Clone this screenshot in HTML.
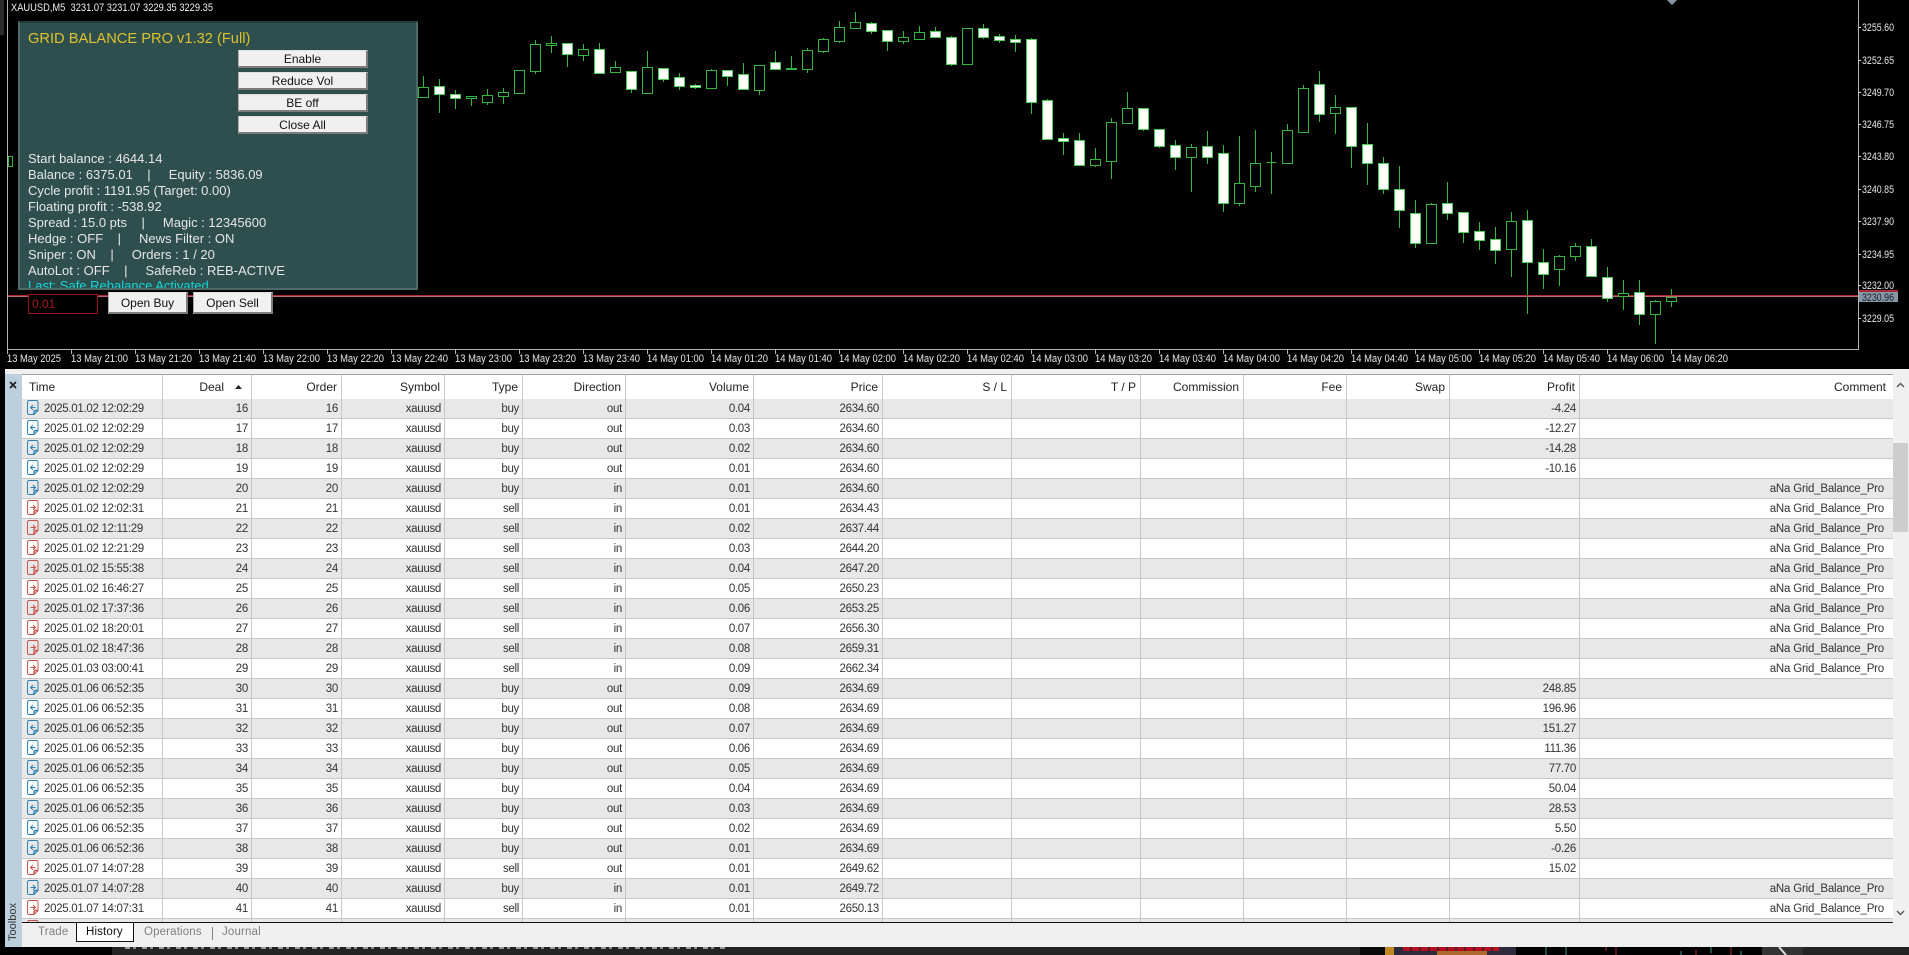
<!DOCTYPE html>
<html><head><meta charset="utf-8"><title>XAUUSD,M5</title>
<style>
html,body{margin:0;padding:0;background:#222}
body{position:relative;width:1909px;height:955px;overflow:hidden;font-family:"Liberation Sans",sans-serif}
.a{position:absolute}
svg text{font-family:"Liberation Sans",sans-serif}
#panel{left:18px;top:21px;width:396px;height:265px;background:#2f4f4f;border:2px solid #4b6a68;border-top-color:#263d3c;overflow:hidden}
#title{left:8px;top:6px;font-size:14.67px;line-height:20px;color:#dcc22c;white-space:pre}
#lines{left:8px;top:128px;font-size:13px;line-height:16px;color:#e6e6e6;white-space:pre}
#lines .c{color:#14d6d6;position:relative;top:-1px}
.btn{box-sizing:border-box;background:#f0f0f0;border-top:1px solid #e0e0e0;border-left:1px solid #a8a8a8;border-right:2px solid #7c7c7c;border-bottom:2px solid #7c7c7c;color:#111;font-size:12px;text-align:center;line-height:17px;white-space:pre}
#edit{left:28px;top:294px;width:70px;height:20px;box-sizing:border-box;border:1px solid #9a1414;background:#000;color:#a81c1c;font-size:12px;line-height:19px;padding-left:3px}
#tw{left:22px;top:374px;width:1871px;height:548px;overflow:hidden;background:#fff}
table{border-collapse:separate;border-spacing:0;table-layout:fixed;width:1871px;font-size:11.5px;letter-spacing:-.3px;color:#333}
td,th{box-sizing:border-box;height:20px;padding:2px 3px 0 0;text-align:right;font-weight:normal;border-right:1px solid #c8c8c8;border-bottom:1px solid #c8c8c8;white-space:nowrap;overflow:hidden;line-height:17px}
th{height:25px;color:#222;font-size:12px;letter-spacing:0;padding:0 4px 0 0;border-bottom:0;border-top:1px solid #a0a0a0;background:#fff;line-height:24px}
th:first-child{text-align:left;padding-left:7px}
td:first-child{text-align:left;padding-left:22px;position:relative}
td:last-child{padding-right:9px;border-right:0;letter-spacing:-.2px}
th:last-child{padding-right:7px;border-right:0}
tbody tr:nth-child(odd){background:#e8e8e8}
td svg{position:absolute;left:5px;top:1px;width:12px;height:15px}
.tab{top:923px;font-size:11.5px;line-height:18px;color:#808080;letter-spacing:.15px}
</style></head><body>
<svg width="0" height="0" style="position:absolute">
<defs>
<symbol id="bo" viewBox="0 0 12 15"><g fill="none" stroke="#2a7fb0" stroke-width=".95"><path d="M2 .5h7.500A1.500 1.500 0 0 1 11 2v8.500l-4 4H2A1.500 1.500 0 0 1 .5 13V2A1.500 1.500 0 0 1 2 .5z"/><path d="M8.500 7.500h-5M6 5L3.500 7.500L6 10"/><path d="M7 14.500v-2.500a1.500 1.500 0 0 1 1.500-1.500H11" stroke-width="1.400"/></g></symbol>
<symbol id="bi" viewBox="0 0 12 15"><g fill="none" stroke="#2a7fb0" stroke-width=".95"><path d="M2 .5h7.500A1.500 1.500 0 0 1 11 2v8.500l-4 4H2A1.500 1.500 0 0 1 .5 13V2A1.500 1.500 0 0 1 2 .5z"/><path d="M3.500 7.500h5M6 5L8.500 7.500L6 10"/><path d="M7 14.500v-2.500a1.500 1.500 0 0 1 1.500-1.500H11" stroke-width="1.400"/></g></symbol>
<symbol id="so" viewBox="0 0 12 15"><g fill="none" stroke="#c8504a" stroke-width=".95"><path d="M2 .5h7.500A1.500 1.500 0 0 1 11 2v8.500l-4 4H2A1.500 1.500 0 0 1 .5 13V2A1.500 1.500 0 0 1 2 .5z"/><path d="M8.500 7.500h-5M6 5L3.500 7.500L6 10"/><path d="M7 14.500v-2.500a1.500 1.500 0 0 1 1.500-1.500H11" stroke-width="1.400"/></g></symbol>
<symbol id="si" viewBox="0 0 12 15"><g fill="none" stroke="#c8504a" stroke-width=".95"><path d="M2 .5h7.500A1.500 1.500 0 0 1 11 2v8.500l-4 4H2A1.500 1.500 0 0 1 .5 13V2A1.500 1.500 0 0 1 2 .5z"/><path d="M3.500 7.500h5M6 5L8.500 7.500L6 10"/><path d="M7 14.500v-2.500a1.500 1.500 0 0 1 1.500-1.500H11" stroke-width="1.400"/></g></symbol>
</defs></svg>

<!-- chart -->
<svg class="a" style="left:0;top:0" width="1909" height="369" viewBox="0 0 1909 369">
<rect width="1909" height="369" fill="#000"/>
<rect x="0" y="0" width="4" height="35" fill="#2c2c2c"/>
<!-- wicks -->
<path fill="none" stroke="#30b83c" d="M423.5 76V97M439.5 79V113M455.5 90V109M471.5 96V106M487.5 89V105M503.5 88V104M535.5 40V74M551.5 36V53M567.5 43V67M583.5 44V61M599.5 43V73M615.5 61V73M631.5 71V93M647.5 51V93M663.5 68V82M679.5 73V90M695.5 84V89M711.5 69V89M727.5 70V86M743.5 63V89M759.5 65V95M775.5 51V69M791.5 56V70M807.5 48V73M823.5 38V53M839.5 21V43M855.5 12V28M871.5 22V34M887.5 30V51M903.5 31V44M919.5 26V39M935.5 27V37M951.5 36V66M967.5 28V64M983.5 24V39M999.5 34V43M1015.5 35V52M1031.5 38V114M1047.5 99V139M1063.5 133V155M1079.5 133V165M1095.5 148V167M1111.5 118V179M1127.5 92V123M1143.5 108V131M1159.5 129V148M1175.5 140V170M1191.5 144V192M1207.5 131V164M1223.5 145V212M1239.5 136V206M1255.5 130V192M1271.5 152V194M1287.5 124V164M1303.5 85V132M1319.5 71V122M1335.5 95V134M1351.5 107V168M1367.5 123V185M1383.5 157V194M1399.5 166V228M1415.5 200V248M1431.5 203V243M1447.5 182V220M1463.5 212V243M1479.5 222V250M1495.5 227V264M1511.5 212V277M1527.5 210V314M1543.5 249V289M1559.5 255V286M1575.5 243V261M1591.5 239V277M1607.5 267V302M1623.5 280V310M1639.5 280V325M1655.5 300V344M1671.5 289V307"/>
<!-- red price line -->
<rect x="8" y="295" width="1850" height="1" fill="#a82833"/>
<rect x="8" y="296" width="1850" height="1" fill="#b86a72"/>
<!-- hollow bodies -->
<path fill="#000" stroke="#30b83c" d="M8.500 156.500h4v10h-4zM418.500 87.500h10v10h-10zM466.500 96.500h10v2h-10zM482.500 95.500h10v7h-10zM498.500 92.500h10v4h-10zM514.500 70.500h10v23h-10zM530.500 44.500h10v27h-10zM546.500 43.500h10v2h-10zM578.500 49.500h10v6h-10zM610.500 67.500h10v5h-10zM642.500 67.500h10v26h-10zM706.500 70.500h10v18h-10zM754.500 65.500h10v25h-10zM786.500 68.500h10v1h-10zM802.500 50.500h10v19h-10zM818.500 39.500h10v12h-10zM834.500 27.500h10v14h-10zM850.500 22.500h10v6h-10zM898.500 37.500h10v4h-10zM914.500 32.500h10v7h-10zM962.500 28.500h10v36h-10zM1090.500 159.500h10v6h-10zM1106.500 122.500h10v39h-10zM1122.500 108.500h10v15h-10zM1186.500 147.500h10v10h-10zM1234.500 183.500h10v20h-10zM1250.500 163.500h10v23h-10zM1266.500 162.500h10M1282.500 130.500h10v33h-10zM1298.500 88.500h10v44h-10zM1330.500 107.500h10v6h-10zM1426.500 204.500h10v39h-10zM1506.500 221.500h10v28h-10zM1554.500 256.500h10v13h-10zM1570.500 246.500h10v10h-10zM1618.500 293.500h10v3h-10zM1650.500 301.500h10v13h-10zM1666.500 297.500h10v4h-10z"/>
<!-- filled bodies -->
<path fill="#fff" stroke="#46d052" d="M434.500 86.500h10v8h-10zM450.500 94.500h10v4h-10zM562.500 43.500h10v11h-10zM594.500 49.500h10v24h-10zM626.500 71.500h10v18h-10zM658.500 68.500h10v11h-10zM674.500 77.500h10v9h-10zM690.500 85.500h10v2h-10zM722.500 70.500h10v6h-10zM738.500 74.500h10v15h-10zM770.500 62.500h10v7h-10zM866.500 23.500h10v8h-10zM882.500 30.500h10v11h-10zM930.500 31.500h10v6h-10zM946.500 37.500h10v27h-10zM978.500 28.500h10v9h-10zM994.500 36.500h10v4h-10zM1010.500 39.500h10v3h-10zM1026.500 39.500h10v63h-10zM1042.500 100.500h10v39h-10zM1058.500 138.500h10v3h-10zM1074.500 140.500h10v25h-10zM1138.500 108.500h10v21h-10zM1154.500 129.500h10v17h-10zM1170.500 145.500h10v12h-10zM1202.500 146.500h10v11h-10zM1218.500 153.500h10v50h-10zM1314.500 84.500h10v30h-10zM1346.500 107.500h10v39h-10zM1362.500 144.500h10v19h-10zM1378.500 163.500h10v26h-10zM1394.500 189.500h10v21h-10zM1410.500 213.500h10v30h-10zM1442.500 203.500h10v10h-10zM1458.500 212.500h10v20h-10zM1474.500 231.500h10v9h-10zM1490.500 239.500h10v11h-10zM1522.500 220.500h10v42h-10zM1538.500 262.500h10v12h-10zM1586.500 246.500h10v30h-10zM1602.500 277.500h10v21h-10zM1634.500 292.500h10v22h-10z"/>
<!-- frame -->
<path fill="none" stroke="#b4b4b4" d="M7.500 0V349.500H1858.500V0"/>
<!-- time ticks -->
<path fill="none" stroke="#b4b4b4" d="M7.500 349V354M71.500 349V354M135.500 349V354M199.500 349V354M263.500 349V354M327.500 349V354M391.500 349V354M455.500 349V354M519.500 349V354M583.500 349V354M647.500 349V354M711.500 349V354M775.500 349V354M839.500 349V354M903.500 349V354M967.500 349V354M1031.500 349V354M1095.500 349V354M1159.500 349V354M1223.500 349V354M1287.500 349V354M1351.500 349V354M1415.500 349V354M1479.500 349V354M1543.500 349V354M1607.500 349V354M1671.500 349V354"/>
<!-- price ticks -->
<path fill="none" stroke="#d8d8d8" d="M1858 27.500H1861M1858 60.500H1861M1858 92.500H1861M1858 124.500H1861M1858 156.500H1861M1858 189.500H1861M1858 221.500H1861M1858 254.500H1861M1858 285.500H1861M1858 318.500H1861"/>
<polygon points="1667,0 1677,0 1672,5" fill="#8a94a0"/>
<g font-size="11" fill="#e8e8e8">
<text x="11" y="11" fill="#f0f0f0" textLength="202" lengthAdjust="spacingAndGlyphs" xml:space="preserve">XAUUSD,M5  3231.07 3231.07 3229.35 3229.35</text>
<text x="1862" y="31" textLength="32" lengthAdjust="spacingAndGlyphs">3255.60</text>
<text x="1862" y="64" textLength="32" lengthAdjust="spacingAndGlyphs">3252.65</text>
<text x="1862" y="96" textLength="32" lengthAdjust="spacingAndGlyphs">3249.70</text>
<text x="1862" y="128" textLength="32" lengthAdjust="spacingAndGlyphs">3246.75</text>
<text x="1862" y="160" textLength="32" lengthAdjust="spacingAndGlyphs">3243.80</text>
<text x="1862" y="193" textLength="32" lengthAdjust="spacingAndGlyphs">3240.85</text>
<text x="1862" y="225" textLength="32" lengthAdjust="spacingAndGlyphs">3237.90</text>
<text x="1862" y="258" textLength="32" lengthAdjust="spacingAndGlyphs">3234.95</text>
<text x="1862" y="289" textLength="32" lengthAdjust="spacingAndGlyphs">3232.00</text>
<text x="1862" y="322" textLength="32" lengthAdjust="spacingAndGlyphs">3229.05</text>
</g>
<rect x="1859" y="290" width="39" height="12" fill="#8796a4"/>
<rect x="1859" y="290" width="39" height="2" fill="#a82a35"/>
<text x="1862" y="301" font-size="11" fill="#16222e" textLength="32" lengthAdjust="spacingAndGlyphs">3230.96</text>
<g font-size="11" fill="#e8e8e8">
<text x="7" y="362" textLength="54" lengthAdjust="spacingAndGlyphs">13 May 2025</text>
<text x="71" y="362" textLength="57" lengthAdjust="spacingAndGlyphs">13 May 21:00</text>
<text x="135" y="362" textLength="57" lengthAdjust="spacingAndGlyphs">13 May 21:20</text>
<text x="199" y="362" textLength="57" lengthAdjust="spacingAndGlyphs">13 May 21:40</text>
<text x="263" y="362" textLength="57" lengthAdjust="spacingAndGlyphs">13 May 22:00</text>
<text x="327" y="362" textLength="57" lengthAdjust="spacingAndGlyphs">13 May 22:20</text>
<text x="391" y="362" textLength="57" lengthAdjust="spacingAndGlyphs">13 May 22:40</text>
<text x="455" y="362" textLength="57" lengthAdjust="spacingAndGlyphs">13 May 23:00</text>
<text x="519" y="362" textLength="57" lengthAdjust="spacingAndGlyphs">13 May 23:20</text>
<text x="583" y="362" textLength="57" lengthAdjust="spacingAndGlyphs">13 May 23:40</text>
<text x="647" y="362" textLength="57" lengthAdjust="spacingAndGlyphs">14 May 01:00</text>
<text x="711" y="362" textLength="57" lengthAdjust="spacingAndGlyphs">14 May 01:20</text>
<text x="775" y="362" textLength="57" lengthAdjust="spacingAndGlyphs">14 May 01:40</text>
<text x="839" y="362" textLength="57" lengthAdjust="spacingAndGlyphs">14 May 02:00</text>
<text x="903" y="362" textLength="57" lengthAdjust="spacingAndGlyphs">14 May 02:20</text>
<text x="967" y="362" textLength="57" lengthAdjust="spacingAndGlyphs">14 May 02:40</text>
<text x="1031" y="362" textLength="57" lengthAdjust="spacingAndGlyphs">14 May 03:00</text>
<text x="1095" y="362" textLength="57" lengthAdjust="spacingAndGlyphs">14 May 03:20</text>
<text x="1159" y="362" textLength="57" lengthAdjust="spacingAndGlyphs">14 May 03:40</text>
<text x="1223" y="362" textLength="57" lengthAdjust="spacingAndGlyphs">14 May 04:00</text>
<text x="1287" y="362" textLength="57" lengthAdjust="spacingAndGlyphs">14 May 04:20</text>
<text x="1351" y="362" textLength="57" lengthAdjust="spacingAndGlyphs">14 May 04:40</text>
<text x="1415" y="362" textLength="57" lengthAdjust="spacingAndGlyphs">14 May 05:00</text>
<text x="1479" y="362" textLength="57" lengthAdjust="spacingAndGlyphs">14 May 05:20</text>
<text x="1543" y="362" textLength="57" lengthAdjust="spacingAndGlyphs">14 May 05:40</text>
<text x="1607" y="362" textLength="57" lengthAdjust="spacingAndGlyphs">14 May 06:00</text>
<text x="1671" y="362" textLength="57" lengthAdjust="spacingAndGlyphs">14 May 06:20</text>
</g>
</svg>

<!-- EA panel -->
<div id="panel" class="a">
<div id="title" class="a">GRID BALANCE PRO v1.32 (Full)</div>
<div id="lines" class="a">Start balance : 4644.14
Balance : 6375.01    |     Equity : 5836.09
Cycle profit : 1191.95 (Target: 0.00)
Floating profit : -538.92
Spread : 15.0 pts    |     Magic : 12345600
Hedge : OFF    |     News Filter : ON
Sniper : ON    |     Orders : 1 / 20
AutoLot : OFF    |     SafeReb : REB-ACTIVE
<span class="c">Last: Safe Rebalance Activated</span></div>
</div>
<div class="a btn" style="left:238px;top:50px;width:130px;height:18px">Enable</div>
<div class="a btn" style="left:238px;top:72px;width:130px;height:18px">Reduce Vol</div>
<div class="a btn" style="left:238px;top:94px;width:130px;height:18px">BE off</div>
<div class="a btn" style="left:238px;top:116px;width:130px;height:18px">Close All</div>
<div id="edit" class="a">0.01</div>
<div class="a btn" style="left:108px;top:292px;width:80px;height:22px;line-height:20px">Open Buy</div>
<div class="a btn" style="left:193px;top:292px;width:80px;height:22px;line-height:20px">Open Sell</div>

<!-- toolbox window -->
<div class="a" style="left:0;top:369px;width:5px;height:586px;background:#000"></div>
<div class="a" style="left:5px;top:369px;width:1904px;height:578px;background:#f0f0f0"></div>
<div class="a" style="left:5px;top:374px;width:17px;height:573px;background:#bccfdc"></div>
<svg class="a" style="left:9px;top:381px" width="8" height="8" viewBox="0 0 8 8"><path d="M1 1L7 7M7 1L1 7" stroke="#1a1a1a" stroke-width="1.600" fill="none"/></svg>
<div class="a" style="left:6px;top:903px;width:15px;height:40px;overflow:visible"><div style="position:absolute;left:-13px;top:12px;width:40px;height:14px;transform:rotate(-90deg);font-size:11px;line-height:14px;color:#333;text-align:center">Toolbox</div></div>

<div id="tw" class="a">
<table>
<colgroup><col style="width:141px"><col style="width:89px"><col style="width:90px"><col style="width:103px"><col style="width:78px"><col style="width:103px"><col style="width:128px"><col style="width:129px"><col style="width:129px"><col style="width:129px"><col style="width:103px"><col style="width:103px"><col style="width:103px"><col style="width:130px"><col style="width:313px"></colgroup>
<thead><tr><th>Time</th><th style="padding-right:27px">Deal</th><th>Order</th><th>Symbol</th><th>Type</th><th>Direction</th><th>Volume</th><th>Price</th><th>S / L</th><th>T / P</th><th>Commission</th><th>Fee</th><th>Swap</th><th>Profit</th><th>Comment</th></tr></thead>
<tbody>
<tr><td><svg><use href="#bo"/></svg>2025.01.02 12:02:29</td><td>16</td><td>16</td><td>xauusd</td><td>buy</td><td>out</td><td>0.04</td><td>2634.60</td><td></td><td></td><td></td><td></td><td></td><td>-4.24</td><td></td></tr>
<tr><td><svg><use href="#bo"/></svg>2025.01.02 12:02:29</td><td>17</td><td>17</td><td>xauusd</td><td>buy</td><td>out</td><td>0.03</td><td>2634.60</td><td></td><td></td><td></td><td></td><td></td><td>-12.27</td><td></td></tr>
<tr><td><svg><use href="#bo"/></svg>2025.01.02 12:02:29</td><td>18</td><td>18</td><td>xauusd</td><td>buy</td><td>out</td><td>0.02</td><td>2634.60</td><td></td><td></td><td></td><td></td><td></td><td>-14.28</td><td></td></tr>
<tr><td><svg><use href="#bo"/></svg>2025.01.02 12:02:29</td><td>19</td><td>19</td><td>xauusd</td><td>buy</td><td>out</td><td>0.01</td><td>2634.60</td><td></td><td></td><td></td><td></td><td></td><td>-10.16</td><td></td></tr>
<tr><td><svg><use href="#bi"/></svg>2025.01.02 12:02:29</td><td>20</td><td>20</td><td>xauusd</td><td>buy</td><td>in</td><td>0.01</td><td>2634.60</td><td></td><td></td><td></td><td></td><td></td><td></td><td>aNa Grid_Balance_Pro</td></tr>
<tr><td><svg><use href="#si"/></svg>2025.01.02 12:02:31</td><td>21</td><td>21</td><td>xauusd</td><td>sell</td><td>in</td><td>0.01</td><td>2634.43</td><td></td><td></td><td></td><td></td><td></td><td></td><td>aNa Grid_Balance_Pro</td></tr>
<tr><td><svg><use href="#si"/></svg>2025.01.02 12:11:29</td><td>22</td><td>22</td><td>xauusd</td><td>sell</td><td>in</td><td>0.02</td><td>2637.44</td><td></td><td></td><td></td><td></td><td></td><td></td><td>aNa Grid_Balance_Pro</td></tr>
<tr><td><svg><use href="#si"/></svg>2025.01.02 12:21:29</td><td>23</td><td>23</td><td>xauusd</td><td>sell</td><td>in</td><td>0.03</td><td>2644.20</td><td></td><td></td><td></td><td></td><td></td><td></td><td>aNa Grid_Balance_Pro</td></tr>
<tr><td><svg><use href="#si"/></svg>2025.01.02 15:55:38</td><td>24</td><td>24</td><td>xauusd</td><td>sell</td><td>in</td><td>0.04</td><td>2647.20</td><td></td><td></td><td></td><td></td><td></td><td></td><td>aNa Grid_Balance_Pro</td></tr>
<tr><td><svg><use href="#si"/></svg>2025.01.02 16:46:27</td><td>25</td><td>25</td><td>xauusd</td><td>sell</td><td>in</td><td>0.05</td><td>2650.23</td><td></td><td></td><td></td><td></td><td></td><td></td><td>aNa Grid_Balance_Pro</td></tr>
<tr><td><svg><use href="#si"/></svg>2025.01.02 17:37:36</td><td>26</td><td>26</td><td>xauusd</td><td>sell</td><td>in</td><td>0.06</td><td>2653.25</td><td></td><td></td><td></td><td></td><td></td><td></td><td>aNa Grid_Balance_Pro</td></tr>
<tr><td><svg><use href="#si"/></svg>2025.01.02 18:20:01</td><td>27</td><td>27</td><td>xauusd</td><td>sell</td><td>in</td><td>0.07</td><td>2656.30</td><td></td><td></td><td></td><td></td><td></td><td></td><td>aNa Grid_Balance_Pro</td></tr>
<tr><td><svg><use href="#si"/></svg>2025.01.02 18:47:36</td><td>28</td><td>28</td><td>xauusd</td><td>sell</td><td>in</td><td>0.08</td><td>2659.31</td><td></td><td></td><td></td><td></td><td></td><td></td><td>aNa Grid_Balance_Pro</td></tr>
<tr><td><svg><use href="#si"/></svg>2025.01.03 03:00:41</td><td>29</td><td>29</td><td>xauusd</td><td>sell</td><td>in</td><td>0.09</td><td>2662.34</td><td></td><td></td><td></td><td></td><td></td><td></td><td>aNa Grid_Balance_Pro</td></tr>
<tr><td><svg><use href="#bo"/></svg>2025.01.06 06:52:35</td><td>30</td><td>30</td><td>xauusd</td><td>buy</td><td>out</td><td>0.09</td><td>2634.69</td><td></td><td></td><td></td><td></td><td></td><td>248.85</td><td></td></tr>
<tr><td><svg><use href="#bo"/></svg>2025.01.06 06:52:35</td><td>31</td><td>31</td><td>xauusd</td><td>buy</td><td>out</td><td>0.08</td><td>2634.69</td><td></td><td></td><td></td><td></td><td></td><td>196.96</td><td></td></tr>
<tr><td><svg><use href="#bo"/></svg>2025.01.06 06:52:35</td><td>32</td><td>32</td><td>xauusd</td><td>buy</td><td>out</td><td>0.07</td><td>2634.69</td><td></td><td></td><td></td><td></td><td></td><td>151.27</td><td></td></tr>
<tr><td><svg><use href="#bo"/></svg>2025.01.06 06:52:35</td><td>33</td><td>33</td><td>xauusd</td><td>buy</td><td>out</td><td>0.06</td><td>2634.69</td><td></td><td></td><td></td><td></td><td></td><td>111.36</td><td></td></tr>
<tr><td><svg><use href="#bo"/></svg>2025.01.06 06:52:35</td><td>34</td><td>34</td><td>xauusd</td><td>buy</td><td>out</td><td>0.05</td><td>2634.69</td><td></td><td></td><td></td><td></td><td></td><td>77.70</td><td></td></tr>
<tr><td><svg><use href="#bo"/></svg>2025.01.06 06:52:35</td><td>35</td><td>35</td><td>xauusd</td><td>buy</td><td>out</td><td>0.04</td><td>2634.69</td><td></td><td></td><td></td><td></td><td></td><td>50.04</td><td></td></tr>
<tr><td><svg><use href="#bo"/></svg>2025.01.06 06:52:35</td><td>36</td><td>36</td><td>xauusd</td><td>buy</td><td>out</td><td>0.03</td><td>2634.69</td><td></td><td></td><td></td><td></td><td></td><td>28.53</td><td></td></tr>
<tr><td><svg><use href="#bo"/></svg>2025.01.06 06:52:35</td><td>37</td><td>37</td><td>xauusd</td><td>buy</td><td>out</td><td>0.02</td><td>2634.69</td><td></td><td></td><td></td><td></td><td></td><td>5.50</td><td></td></tr>
<tr><td><svg><use href="#bo"/></svg>2025.01.06 06:52:36</td><td>38</td><td>38</td><td>xauusd</td><td>buy</td><td>out</td><td>0.01</td><td>2634.69</td><td></td><td></td><td></td><td></td><td></td><td>-0.26</td><td></td></tr>
<tr><td><svg><use href="#so"/></svg>2025.01.07 14:07:28</td><td>39</td><td>39</td><td>xauusd</td><td>sell</td><td>out</td><td>0.01</td><td>2649.62</td><td></td><td></td><td></td><td></td><td></td><td>15.02</td><td></td></tr>
<tr><td><svg><use href="#bi"/></svg>2025.01.07 14:07:28</td><td>40</td><td>40</td><td>xauusd</td><td>buy</td><td>in</td><td>0.01</td><td>2649.72</td><td></td><td></td><td></td><td></td><td></td><td></td><td>aNa Grid_Balance_Pro</td></tr>
<tr><td><svg><use href="#si"/></svg>2025.01.07 14:07:31</td><td>41</td><td>41</td><td>xauusd</td><td>sell</td><td>in</td><td>0.01</td><td>2650.13</td><td></td><td></td><td></td><td></td><td></td><td></td><td>aNa Grid_Balance_Pro</td></tr>
<tr><td><svg><use href="#si"/></svg></td><td></td><td></td><td></td><td></td><td></td><td></td><td></td><td></td><td></td><td></td><td></td><td></td><td></td><td></td></tr>
</tbody></table>
</div>
<svg class="a" style="left:235px;top:385px" width="7" height="5" viewBox="0 0 7 5"><polygon points="3.5,0 7,4 0,4" fill="#222"/></svg>

<!-- scrollbar -->
<div class="a" style="left:1893px;top:443px;width:15px;height:89px;background:#cdcdcd"></div>
<svg class="a" style="left:1896px;top:382px" width="9" height="6" viewBox="0 0 9 6"><path d="M1 5L4.500 1.500L8 5" fill="none" stroke="#555" stroke-width="1.400"/></svg>
<svg class="a" style="left:1896px;top:910px" width="9" height="6" viewBox="0 0 9 6"><path d="M1 1L4.500 4.500L8 1" fill="none" stroke="#555" stroke-width="1.400"/></svg>

<!-- tabs -->
<div class="a" style="left:22px;top:922px;width:1887px;height:25px;background:#f0f0f0"></div>
<div class="a" style="left:22px;top:922px;width:1871px;height:1px;background:#111"></div>
<div class="a" style="left:76px;top:922px;width:58px;height:20px;box-sizing:border-box;background:#fff;border:1px solid #111"></div>
<div class="a tab" style="left:38px">Trade</div>
<div class="a tab" style="left:86px;color:#111">History</div>
<div class="a tab" style="left:144px">Operations</div>
<div class="a" style="left:212px;top:927px;width:1px;height:13px;background:#808080"></div>
<div class="a tab" style="left:222px">Journal</div>

<!-- desktop behind -->
<div class="a" style="left:0;top:947px;width:112px;height:8px;background:#000"></div>
<div class="a" style="left:112px;top:947px;width:1250px;height:8px;background:#232323"></div>
<div class="a" style="left:125px;top:947px;width:600px;height:2px;background:repeating-linear-gradient(90deg,#9a9a9a 0 5px,#232323 5px 8px,#8a8a8a 8px 11px,#232323 11px 17px)"></div>
<div class="a" style="left:1360px;top:947px;width:25px;height:8px;background:#0a0a0a"></div>
<div class="a" style="left:1385px;top:947px;width:131px;height:8px;background:#2e2a3c"></div>
<div class="a" style="left:1385px;top:947px;width:9px;height:8px;background:#c08a20"></div>
<div class="a" style="left:1437px;top:951px;width:50px;height:4px;background:#b06a30"></div>
<div class="a" style="left:1403px;top:947px;width:96px;height:4px;background:repeating-linear-gradient(90deg,#b01020 0 7px,#5a1a20 7px 9px)"></div>
<div class="a" style="left:1516px;top:947px;width:246px;height:8px;background:#000"></div>
<svg class="a" style="left:1516px;top:947px" width="246" height="8" viewBox="0 0 246 8"><path d="M30 0V8M50 0V8" stroke="#3a9a8a" fill="none"/><path d="M90 0V4M100 0V8" stroke="#a03030" fill="none"/><path d="M165 4V8M195 0V6M225 4V8" stroke="#3a9a8a" fill="none"/><path d="M180 3V8M215 0V8" stroke="#a03030" fill="none"/></svg>
<div class="a" style="left:1762px;top:947px;width:41px;height:8px;background:#333"></div>
<svg class="a" style="left:1762px;top:947px" width="41" height="8" viewBox="0 0 41 8"><path d="M17 0L24 8" stroke="#ddd" stroke-width="2" fill="none"/></svg>
<div class="a" style="left:1803px;top:947px;width:106px;height:8px;background:#232323"></div>
</body></html>
